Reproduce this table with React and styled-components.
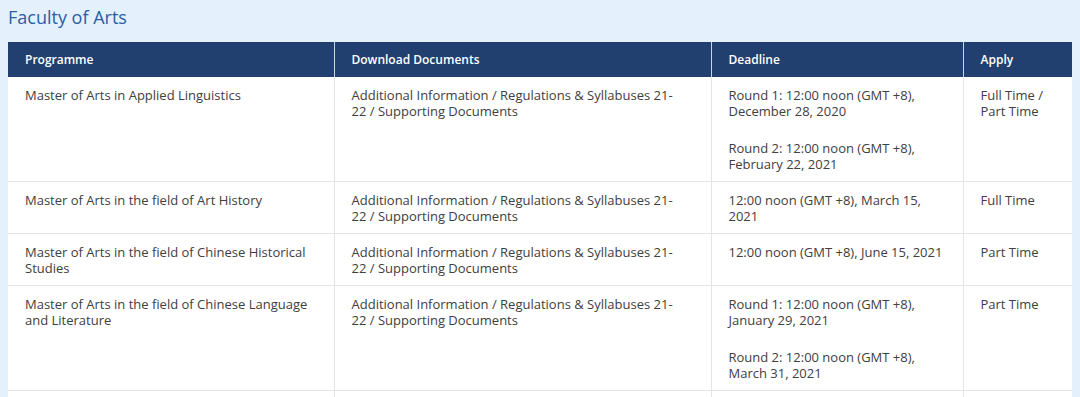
import React from 'react';
import styled, { createGlobalStyle } from 'styled-components';

const GlobalStyle = createGlobalStyle`
  html, body {
    margin: 0;
    padding: 0;
    background: #e4f0fc;
    font-family: "Open Sans", Lato, sans-serif;
  }
`;

const Page = styled.div`
  padding: 0 8px;
  height: 397px;
  overflow: hidden;
`;

const Title = styled.h2`
  margin: 0;
  padding: 5px 0 0;
  height: 42px;
  box-sizing: border-box;
  font-size: 18px;
  font-weight: 400;
  line-height: 24px;
  color: #2d5da3;
`;

const Table = styled.table`
  width: 1064px;
  border-collapse: collapse;
  table-layout: fixed;
  background: #fff;
`;

const Head = styled.th`
  background: #21406f;
  color: #fff;
  font-size: 12px;
  font-weight: 600;
  line-height: 16px;
  text-align: left;
  padding: 10px 17px 9px;
  border-left: 1px solid #c9d5e4;
  &:first-child { border-left: none; }
`;

const Cell = styled.td`
  vertical-align: top;
  color: #404040;
  font-size: 13px;
  line-height: 16px;
  padding: 10px ${p => p.$pr || 17}px 9px 17px;
  border: 1px solid #e4e4e4;
  border-top: none;
  &:first-child { border-left: none; }
  &:last-child { border-right: none; }
`;

const Para = styled.p`
  margin: 0;
  & + & { margin-top: 21px; }
`;

const DOCS = 'Additional Information / Regulations & Syllabuses 21-\u200B22 / Supporting Documents';

const widths = [326, 377, 252, 109];

const rows = [
  {
    name: 'Master of Arts in Applied Linguistics',
    deadline: ['Round 1: 12:00 noon (GMT +8), December 28, 2020', 'Round 2: 12:00 noon (GMT +8), February 22, 2021'],
    apply: 'Full Time / Part Time',
  },
  {
    name: 'Master of Arts in the field of Art History',
    deadline: ['12:00 noon (GMT +8), March 15, 2021'],
    apply: 'Full Time',
  },
  {
    name: 'Master of Arts in the field of Chinese Historical Studies',
    deadline: ['12:00 noon (GMT +8), June 15, 2021'],
    apply: 'Part Time',
  },
  {
    name: 'Master of Arts in the field of Chinese Language and Literature',
    deadline: ['Round 1: 12:00 noon (GMT +8), January 29, 2021', 'Round 2: 12:00 noon (GMT +8), March 31, 2021'],
    apply: 'Part Time',
  },
  {
    name: 'Master of Arts in the field of Comparative and Public History',
    deadline: ['12:00 noon (GMT +8), April 30, 2021'],
    apply: 'Full Time / Part Time',
  },
];

export default function App() {
  return (
    <Page>
      <GlobalStyle />
      <Title>Faculty of Arts</Title>
      <Table>
        <colgroup>
          {widths.map((w, i) => <col key={i} style={{ width: w }} />)}
        </colgroup>
        <thead>
          <tr>
            <Head>Programme</Head>
            <Head>Download Documents</Head>
            <Head>Deadline</Head>
            <Head>Apply</Head>
          </tr>
        </thead>
        <tbody>
          {rows.map(r => (
            <tr key={r.name}>
              <Cell>{r.name}</Cell>
              <Cell $pr={28}>{DOCS}</Cell>
              <Cell>
                {r.deadline.map(d => <Para key={d}>{d}</Para>)}
              </Cell>
              <Cell>{r.apply}</Cell>
            </tr>
          ))}
        </tbody>
      </Table>
    </Page>
  );
}
